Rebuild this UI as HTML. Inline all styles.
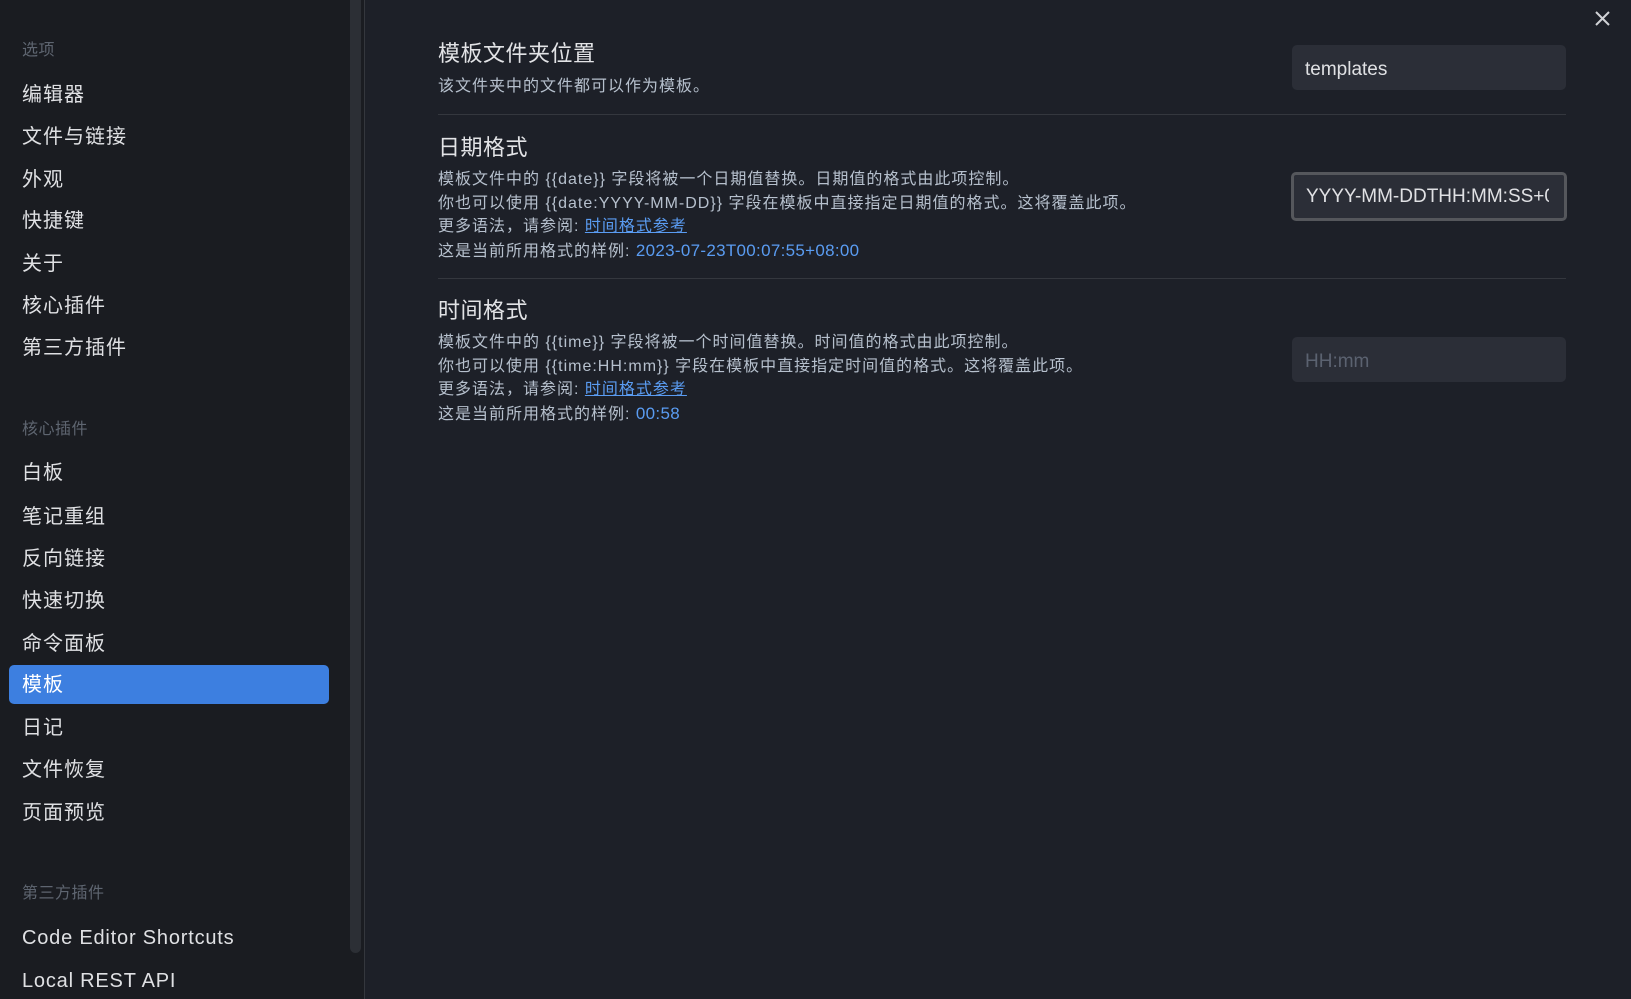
<!DOCTYPE html>
<html><head><meta charset="utf-8"><style>
*{margin:0;padding:0;box-sizing:border-box}
body{width:1631px;height:999px;overflow:hidden;background:#1d2028;font-family:"Liberation Sans","Noto Sans CJK SC",sans-serif;color:#dcdde0;position:relative}
.side{position:absolute;left:0;top:0;width:365px;height:999px;background:#1a1c21;border-right:1px solid #34373d}
.sb{position:absolute;left:350px;top:0;width:11px;height:953px;background:#2c2f35;border-radius:0 0 6px 6px}
.h{position:absolute;left:22px;font-size:16px;line-height:20px;color:#5e6570;letter-spacing:0.5px}
.it{position:absolute;left:22px;font-size:20px;line-height:24px;color:#dfe0e3;letter-spacing:1px}
.act{position:absolute;left:9px;top:665px;width:320px;height:39px;background:#3d7fe0;border-radius:5px}
.t{position:absolute;left:438px;font-size:22px;line-height:26px;color:#e2e3e6;letter-spacing:0.5px}
.d{position:absolute;left:438px;font-size:16px;line-height:23.5px;color:#b6c0cd;white-space:nowrap;letter-spacing:1px}
.d .v{color:#5a9cf2;font-size:17px;letter-spacing:0.3px}
.d a{color:#5a9cf2;text-decoration:underline}
.sep{position:absolute;left:438px;width:1128px;height:1px;background:#34373e}
.in{position:absolute;left:1292px;width:274px;height:45px;background:#2b2e37;border-radius:5px;font-size:19px;line-height:45px;padding-left:13px;color:#e0e1e4;white-space:nowrap;overflow:hidden}
</style></head><body>
<div class="side">
<div class="sb"></div>
<div class="h" style="top:41px">选项</div>
<div class="it" style="top:83px">编辑器</div>
<div class="it" style="top:125px">文件与链接</div>
<div class="it" style="top:168px">外观</div>
<div class="it" style="top:209px">快捷键</div>
<div class="it" style="top:252px">关于</div>
<div class="it" style="top:294px">核心插件</div>
<div class="it" style="top:336px">第三方插件</div>
<div class="h" style="top:420px">核心插件</div>
<div class="it" style="top:461px">白板</div>
<div class="it" style="top:505px">笔记重组</div>
<div class="it" style="top:547px">反向链接</div>
<div class="it" style="top:589px">快速切换</div>
<div class="it" style="top:632px">命令面板</div>
<div class="act"></div>
<div class="it" style="top:673px;color:#fff">模板</div>
<div class="it" style="top:716px">日记</div>
<div class="it" style="top:758px">文件恢复</div>
<div class="it" style="top:801px">页面预览</div>
<div class="h" style="top:884px">第三方插件</div>
<div class="it" style="top:926px;letter-spacing:0.8px">Code Editor Shortcuts</div>
<div class="it" style="top:969px;letter-spacing:0.8px">Local REST API</div>
</div>
<svg style="position:absolute;left:1594px;top:10px" width="17" height="17" viewBox="0 0 17 17"><path d="M2 2L15 15M15 2L2 15" stroke="#d0d2d6" stroke-width="2"/></svg>

<div class="t" style="top:41px">模板文件夹位置</div>
<div class="d" style="top:75px">该文件夹中的文件都可以作为模板。</div>
<div class="in" style="top:45px;padding-top:2px">templates</div>
<div class="sep" style="top:114px"></div>

<div class="t" style="top:135px">日期格式</div>
<div class="d" style="top:168px">模板文件中的 {{date}} 字段将被一个日期值替换。日期值的格式由此项控制。<br>你也可以使用 {{date:YYYY-MM-DD}} 字段在模板中直接指定日期值的格式。这将覆盖此项。<br>更多语法，请参阅: <a>时间格式参考</a><br>这是当前所用格式的样例: <span class="v">2023-07-23T00:07:55+08:00</span></div>
<div class="in" style="top:172px;height:49px;border:3px solid #55575c;left:1291px;width:276px;line-height:43px;padding-left:12px"><span style="display:inline-block;width:243px;overflow:hidden;vertical-align:top">YYYY-MM-DDTHH:MM:SS+08:00</span></div>
<div class="sep" style="top:278px"></div>

<div class="t" style="top:298px">时间格式</div>
<div class="d" style="top:331px">模板文件中的 {{time}} 字段将被一个时间值替换。时间值的格式由此项控制。<br>你也可以使用 {{time:HH:mm}} 字段在模板中直接指定时间值的格式。这将覆盖此项。<br>更多语法，请参阅: <a>时间格式参考</a><br>这是当前所用格式的样例: <span class="v">00:58</span></div>
<div class="in" style="top:337px;color:#5b6270;padding-top:2px">HH:mm</div>
</body></html>
